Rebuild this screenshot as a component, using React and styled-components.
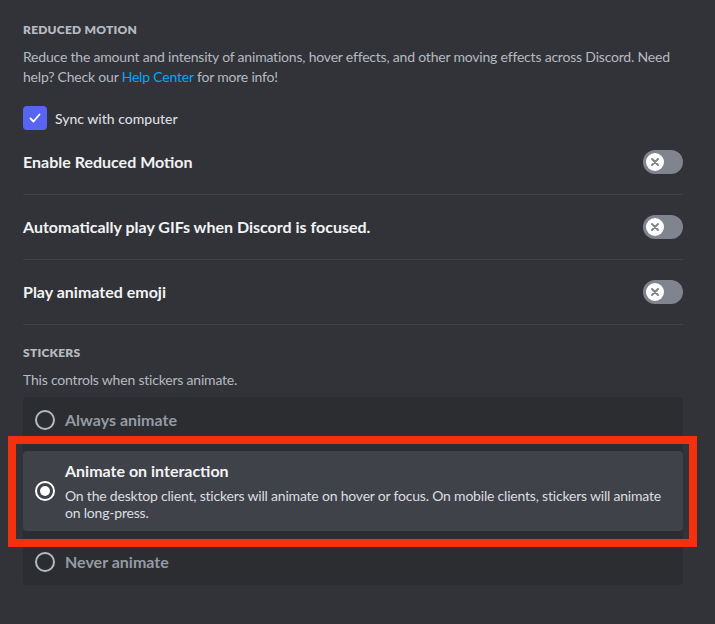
import React, { useState } from 'react';
import styled, { createGlobalStyle } from 'styled-components';

const GlobalStyle = createGlobalStyle`
  body {
    margin: 0;
    background: #313338;
    font-family: Lato, "Noto Sans", sans-serif;
  }
`;

const Page = styled.div`
  position: relative;
  padding: 22px 32px 0 23px;
  height: 624px;
  box-sizing: border-box;
`;

const SectionTitle = styled.h2`
  margin: ${(p) => p.$top || 0}px 0 0;
  font-size: 12px;
  line-height: 16px;
  font-weight: 800;
  letter-spacing: 0.02em;
  text-transform: uppercase;
  color: #b5bac1;
`;

const Description = styled.div`
  margin-top: ${(p) => p.$top || 0}px;
  font-size: 14px;
  line-height: 20px;
  letter-spacing: -0.2px;
  color: #b5bac1;
`;

const Link = styled.a`
  color: #00a8fc;
  text-decoration: none;
`;

const CheckRow = styled.label`
  display: flex;
  align-items: center;
  gap: 8px;
  margin-top: 19px;
  font-size: 14px;
  font-weight: 500;
  color: #dbdee1;
`;

const CheckBox = styled.span`
  width: 24px;
  height: 24px;
  border-radius: 4px;
  background: #5865f2;
  display: flex;
  align-items: center;
  justify-content: center;
`;

const SettingRow = styled.div`
  display: flex;
  align-items: center;
  justify-content: space-between;
  padding: 20px 0;
  border-bottom: 1px solid #3f4147;
`;

const SettingLabel = styled.span`
  font-size: 16px;
  line-height: 20px;
  font-weight: 700;
  color: #f2f3f5;
`;

const Track = styled.button`
  width: 40px;
  height: 24px;
  border: none;
  padding: 0 3px;
  border-radius: 12px;
  background: #80848e;
  display: flex;
  align-items: center;
  cursor: pointer;
`;

const Knob = styled.span`
  width: 18px;
  height: 18px;
  border-radius: 50%;
  background: #fff;
  display: flex;
  align-items: center;
  justify-content: center;
`;

const RadioGroup = styled.div`
  margin-top: 7px;
  background: #2b2d31;
  border-radius: 4px;
  display: flex;
  flex-direction: column;
  gap: 8px;
`;

const RadioItem = styled.div`
  display: flex;
  align-items: center;
  gap: 10px;
  min-height: 46px;
  padding: 10px 10px 10px 12px;
  box-sizing: border-box;
  border-radius: 4px;
  background: ${(p) => (p.$selected ? '#404249' : 'transparent')};
  cursor: pointer;
`;

const RadioText = styled.div`
  display: flex;
  flex-direction: column;
`;

const RadioTitle = styled.span`
  font-size: 16px;
  line-height: 20px;
  font-weight: 700;
  color: ${(p) => (p.$selected ? '#f2f3f5' : '#949ba4')};
`;

const RadioDesc = styled.span`
  margin-top: 6px;
  font-size: 14px;
  line-height: 17px;
  letter-spacing: -0.2px;
  color: #dbdee1;
`;

const Highlight = styled.div`
  position: absolute;
  left: 8px;
  top: 436px;
  width: 689px;
  height: 111px;
  box-sizing: border-box;
  border: 8px solid #f4300f;
  pointer-events: none;
`;

const Toggle = () => (
  <Track>
    <Knob>
      <svg width="10" height="10" viewBox="0 0 10 10">
        <path d="M2 2L8 8M8 2L2 8" stroke="#80848e" strokeWidth="2" strokeLinecap="round" />
      </svg>
    </Knob>
  </Track>
);

const Radio = ({ checked }) => (
  <svg width="20" height="20" viewBox="0 0 20 20" style={{ flexShrink: 0 }}>
    <circle cx="10" cy="10" r="9" fill="none" stroke={checked ? '#fff' : '#b5bac1'} strokeWidth="2" />
    {checked && <circle cx="10" cy="10" r="5" fill="#fff" />}
  </svg>
);

const options = [
  { id: 'always', title: 'Always animate' },
  {
    id: 'interaction',
    title: 'Animate on interaction',
    desc: 'On the desktop client, stickers will animate on hover or focus. On mobile clients, stickers will animate on long-press.',
  },
  { id: 'never', title: 'Never animate' },
];

const settings = ['Enable Reduced Motion', 'Automatically play GIFs when Discord is focused.', 'Play animated emoji'];

const App = () => {
  const [choice, setChoice] = useState('interaction');

  return (
    <>
      <GlobalStyle />
      <Page>
        <SectionTitle>Reduced Motion</SectionTitle>
        <Description $top={9}>
          Reduce the amount and intensity of animations, hover effects, and other moving effects across Discord. Need
          help? Check our <Link href="#">Help Center</Link> for more info!
        </Description>
        <CheckRow>
          <CheckBox>
            <svg width="16" height="16" viewBox="0 0 16 16">
              <path d="M3.5 8.5L6.5 11.5L12.5 4.5" fill="none" stroke="#fff" strokeWidth="1.8" strokeLinecap="round" strokeLinejoin="round" />
            </svg>
          </CheckBox>
          Sync with computer
        </CheckRow>
        {settings.map((s) => (
          <SettingRow key={s}>
            <SettingLabel>{s}</SettingLabel>
            <Toggle />
          </SettingRow>
        ))}
        <SectionTitle $top={20}>Stickers</SectionTitle>
        <Description $top={9}>This controls when stickers animate.</Description>
        <RadioGroup>
          {options.map((o) => (
            <RadioItem key={o.id} $selected={choice === o.id} onClick={() => setChoice(o.id)}>
              <Radio checked={choice === o.id} />
              <RadioText>
                <RadioTitle $selected={choice === o.id}>{o.title}</RadioTitle>
                {o.desc && <RadioDesc>{o.desc}</RadioDesc>}
              </RadioText>
            </RadioItem>
          ))}
        </RadioGroup>
        <Highlight />
      </Page>
    </>
  );
};

export default App;
